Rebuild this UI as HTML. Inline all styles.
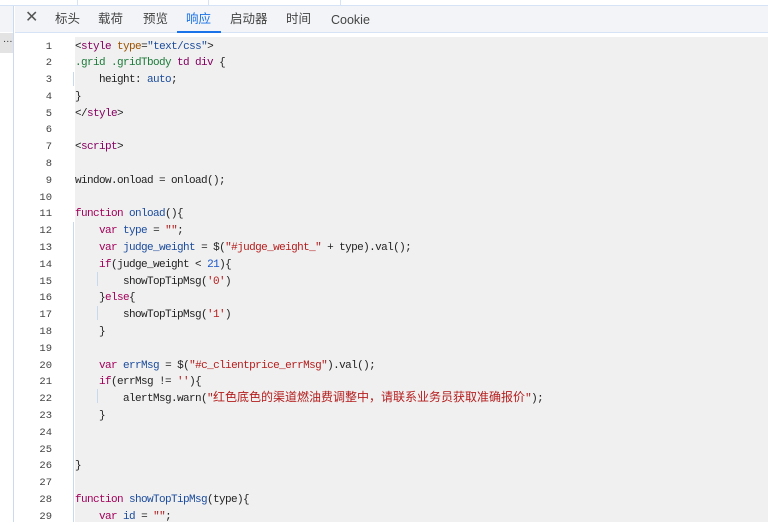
<!DOCTYPE html>
<html><head><meta charset="utf-8"><style>
*{margin:0;padding:0;box-sizing:border-box}
body{width:768px;height:522px;overflow:hidden;background:#fff;position:relative;font-family:"Liberation Sans","Noto Sans CJK SC",sans-serif}
.top{position:absolute;left:0;top:0;width:768px;height:6px;background:#fff;border-bottom:1px solid #d6e2f5}
.sep{position:absolute;top:0;width:1px;height:5px;background:#d6e2f5}
.left{position:absolute;left:0;top:6px;width:14px;height:516px;border-right:1px solid #cdd9ee;background:#fff}
.lt{position:absolute;left:0;top:0;width:13px;height:26px;background:#f2f4f7}
.lg{position:absolute;left:0;top:27px;width:13px;height:20px;background:#e3e3e3;font-size:10px;color:#333;line-height:14px}
.tabs{position:absolute;left:15px;top:6px;width:753px;height:27px;background:#f2f4f7;border-bottom:1px solid #d6e2f5;font-size:12.5px;color:#444}
.tabs span{position:absolute;top:5px;line-height:16px;height:16px}
.act{color:#1a73e8}
.ul{position:absolute;left:177px;top:31px;width:44px;height:2px;background:#1a73e8}
.code{position:absolute;left:75px;top:37px;width:693px;height:485px;background:#f0f0f0}
.ln{position:absolute;left:15px;top:38.5px;width:37px;text-align:right;font-family:"Liberation Mono",monospace;font-size:10.5px;color:#444}
.ln div,pre div{height:16.8px;line-height:16.8px;white-space:pre}
pre{position:absolute;left:75px;top:38.5px;font-family:"Liberation Mono","Noto Sans CJK SC",monospace;font-size:11px;letter-spacing:-0.6px;color:#222}
.k{color:#a3005a}.b{color:#1a4b9c}.s{color:#b51d1d}.a{color:#9a5200}.t{color:#850060}.g{color:#1d7a3a}.n{color:#1a56c8}
.cj{font-family:"Noto Sans CJK SC",sans-serif;font-size:12px;letter-spacing:0;line-height:1}
.guide{position:absolute;width:1px;background:#c8d8f0}
</style></head><body>
<div class="top"><div class="sep" style="left:77px"></div><div class="sep" style="left:208px"></div><div class="sep" style="left:340px"></div></div>
<div class="left"><div class="lt"></div><div class="lg">&nbsp;…</div></div>
<div class="tabs">
<span style="left:10px;top:4px;font-size:16px;color:#555">✕</span>
<span style="left:40px">标头</span><span style="left:83px">载荷</span><span style="left:128px">预览</span><span class="act" style="left:171px">响应</span><span style="left:215px">启动器</span><span style="left:271px">时间</span><span style="left:316px;top:6px">Cookie</span>
</div>
<div class="ul"></div>
<div class="code"></div>
<div class="guide" style="left:73px;top:72px;height:14px"></div>
<div class="guide" style="left:73px;top:222px;height:285px"></div>
<div class="guide" style="left:73px;top:507px;height:15px"></div>
<div class="guide" style="left:97px;top:272px;height:14px"></div>
<div class="guide" style="left:97px;top:306px;height:14px"></div>
<div class="guide" style="left:97px;top:389px;height:14px"></div>
<div class="ln"><div>1</div><div>2</div><div>3</div><div>4</div><div>5</div><div>6</div><div>7</div><div>8</div><div>9</div><div>10</div><div>11</div><div>12</div><div>13</div><div>14</div><div>15</div><div>16</div><div>17</div><div>18</div><div>19</div><div>20</div><div>21</div><div>22</div><div>23</div><div>24</div><div>25</div><div>26</div><div>27</div><div>28</div><div>29</div></div>
<pre><div>&lt;<span class="t">style</span> <span class="a">type</span>=<span class="b">"text/css"</span>&gt;</div><div><span class="g">.grid .gridTbody</span> <span class="t">td div</span> {</div><div>    height: <span class="b">auto</span>;</div><div>}</div><div>&lt;/<span class="t">style</span>&gt;</div><div> </div><div>&lt;<span class="t">script</span>&gt;</div><div> </div><div>window.onload = onload();</div><div> </div><div><span class="k">function</span> <span class="b">onload</span>(){</div><div>    <span class="k">var</span> <span class="b">type</span> = <span class="s">""</span>;</div><div>    <span class="k">var</span> <span class="b">judge_weight</span> = $(<span class="s">"#judge_weight_"</span> + type).val();</div><div>    <span class="k">if</span>(judge_weight &lt; <span class="n">21</span>){</div><div>        showTopTipMsg(<span class="s">'0'</span>)</div><div>    }<span class="k">else</span>{</div><div>        showTopTipMsg(<span class="s">'1'</span>)</div><div>    }</div><div> </div><div>    <span class="k">var</span> <span class="b">errMsg</span> = $(<span class="s">"#c_clientprice_errMsg"</span>).val();</div><div>    <span class="k">if</span>(errMsg != <span class="s">''</span>){</div><div>        alertMsg.warn(<span class="s">"<span class="cj">红色底色的渠道燃油费调整中，请联系业务员获取准确报价</span>"</span>);</div><div>    }</div><div> </div><div> </div><div>}</div><div> </div><div><span class="k">function</span> <span class="b">showTopTipMsg</span>(type){</div><div>    <span class="k">var</span> <span class="b">id</span> = <span class="s">""</span>;</div></pre>
</body></html>
